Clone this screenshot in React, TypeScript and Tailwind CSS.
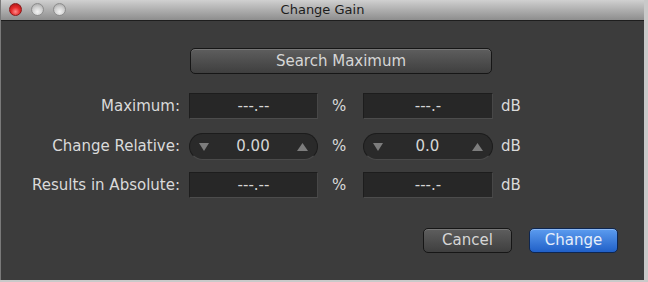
import React from "react";

const font = { fontFamily: '"DejaVu Sans", "Liberation Sans", sans-serif' };

function Light({ red }: { red?: boolean }) {
  return (
    <div
      className={
        "h-[13px] w-[13px] rounded-full border " +
        (red
          ? "border-[#8a1a1a] bg-[radial-gradient(circle_at_50%_70%,#ff8a8a_0%,#e52b2b_45%,#a10f0f_100%)]"
          : "border-[#8c8c8c] bg-[radial-gradient(circle_at_50%_70%,#f4f4f4_0%,#cfcfcf_50%,#9d9d9d_100%)]")
      }
    />
  );
}

function Field({ value }: { value: string }) {
  return (
    <div className="flex h-[26px] items-center justify-center border border-[#1d1d1d] border-b-[#4c4c4c] border-r-[#474747] bg-[#272727] text-[15px] text-[#d6d6d6]">
      {value}
    </div>
  );
}

function Stepper({ value }: { value: string }) {
  return (
    <div className="flex h-[27px] items-center justify-between rounded-full border border-[#1c1c1c] border-b-[#4a4a4a] bg-[#2a2a2a] px-[9px] text-[15px] text-[#d6d6d6]">
      <svg width="10" height="8" viewBox="0 0 10 8">
        <path d="M0 0H10L5 8Z" fill="#7d7d7d" />
      </svg>
      <span>{value}</span>
      <svg width="11" height="8" viewBox="0 0 11 8">
        <path d="M0 8H11L5.5 0Z" fill="#7d7d7d" />
      </svg>
    </div>
  );
}

function Row({ label, children }: { label: string; children: React.ReactNode }) {
  return (
    <div className="grid grid-cols-[188px_129px_45px_130px_auto] items-center text-[15px] text-[#dadada]">
      <div className="pr-[9px] text-right">{label}</div>
      {children}
    </div>
  );
}

function Units({ first, second }: { first: React.ReactNode; second: React.ReactNode }) {
  return (
    <>
      {first}
      <div className="pl-[14px]">%</div>
      {second}
      <div className="pl-[8px]">dB</div>
    </>
  );
}

function Button({ children, blue }: { children: React.ReactNode; blue?: boolean }) {
  return (
    <div
      className={
        "flex h-[25px] w-[89px] items-center justify-center rounded-[5px] border text-[15px] " +
        (blue
          ? "border-[#0e2650] bg-gradient-to-b from-[#5c9cef] to-[#2060c8] text-[#e6eefa] shadow-[inset_0_1px_0_#8ab8f5]"
          : "border-[#161616] bg-gradient-to-b from-[#5e5e5e] to-[#3f3f3f] text-[#d6d6d6] shadow-[inset_0_1px_0_#767676]")
      }
    >
      {children}
    </div>
  );
}

export default function App() {
  return (
    <div className="h-[282px] w-[648px] bg-[#c9c9c9]" style={font}>
      <div className="flex h-[280px] w-[644px] flex-col border-l border-[#7a7a7a] bg-[#3c3c3c]">
        <div className="relative flex h-[21px] items-center border-b border-[#1e1e1e] bg-gradient-to-b from-[#d0d0d0] to-[#8e8e8e]">
          <div className="absolute left-[8px] top-[3px] flex gap-[9px]">
            <Light red />
            <Light />
            <Light />
          </div>
          <div className="w-full text-center text-[13px] text-[#1c1c1c]">Change Gain</div>
        </div>

        <div className="pl-[188px] pt-[27px]">
          <div className="ml-[1px] flex h-[26px] w-[302px] items-center justify-center rounded-[5px] border border-[#161616] bg-gradient-to-b from-[#5e5e5e] to-[#3f3f3f] text-[15px] text-[#d6d6d6] shadow-[inset_0_1px_0_#767676]">
            Search Maximum
          </div>
        </div>

        <div className="mt-[19px] flex flex-col">
          <Row label="Maximum:">
            <Units first={<Field value="---.--" />} second={<Field value="---.-" />} />
          </Row>
          <div className="mt-[14px]">
            <Row label="Change Relative:">
              <Units first={<Stepper value="0.00" />} second={<Stepper value="0.0" />} />
            </Row>
          </div>
          <div className="mt-[12px]">
            <Row label="Results in Absolute:">
              <Units first={<Field value="---.--" />} second={<Field value="---.-" />} />
            </Row>
          </div>
        </div>

        <div className="mt-[30px] flex gap-[17px] pl-[422px]">
          <Button>Cancel</Button>
          <Button blue>Change</Button>
        </div>
      </div>
    </div>
  );
}
